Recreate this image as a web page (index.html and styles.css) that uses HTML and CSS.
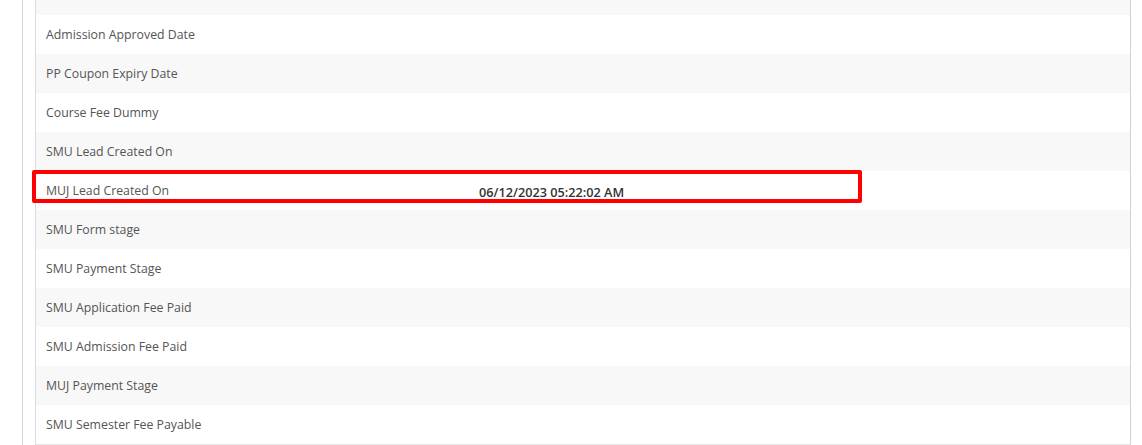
FILE: index.html
```html
<!DOCTYPE html>
<html lang="en">
<head>
    <meta charset="UTF-8">
    <title>Lead Details</title>
    <link rel="stylesheet" href="styles.css">
</head>
<body>
    <div class="painel">
        <div class="tabela">
            <div class="linha"><span class="rotulo"></span><span class="valor"></span></div>
            <div class="linha"><span class="rotulo">Admission Approved Date</span><span class="valor"></span></div>
            <div class="linha"><span class="rotulo">PP Coupon Expiry Date</span><span class="valor"></span></div>
            <div class="linha"><span class="rotulo">Course Fee Dummy</span><span class="valor"></span></div>
            <div class="linha"><span class="rotulo">SMU Lead Created On</span><span class="valor"></span></div>
            <div class="linha destaque"><span class="rotulo">MUJ Lead Created On</span><span class="valor">06/12/2023 05:22:02 AM</span></div>
            <div class="linha"><span class="rotulo">SMU Form stage</span><span class="valor"></span></div>
            <div class="linha"><span class="rotulo">SMU Payment Stage</span><span class="valor"></span></div>
            <div class="linha"><span class="rotulo">SMU Application Fee Paid</span><span class="valor"></span></div>
            <div class="linha"><span class="rotulo">SMU Admission Fee Paid</span><span class="valor"></span></div>
            <div class="linha"><span class="rotulo">MUJ Payment Stage</span><span class="valor"></span></div>
            <div class="linha"><span class="rotulo">SMU Semester Fee Payable</span><span class="valor"></span></div>
        </div>
    </div>
</body>
</html>
```

FILE: styles.css
```css
body {
    margin: 0;
    font-family: "Open Sans", "Noto Sans", Arial, sans-serif;
    background-color: white;
    overflow: hidden;
}
.painel {
    margin-left: 22px;
    padding-left: 12px;
    padding-right: 11px;
    border-left: 1px solid #d6d6d6;
}
.tabela {
    margin-top: -24px;
    border-left: 1px solid #dcdcdc;
    border-right: 1px solid #d0d0d0;
    border-bottom: 1px solid #e6e6e6;
}
.linha {
    display: grid;
    grid-template-columns: 433px 1fr;
    align-items: center;
    height: 39px;
    padding-left: 10px;
    font-size: 12.3px;
    color: #555;
    background-color: white;
}
.linha:nth-child(odd) {
    background-color: #f8f8f8;
}
.valor {
    color: #333;
    font-size: 12.7px;
    font-weight: 600;
    padding-top: 2px;
}
.destaque {
    position: relative;
}
.destaque::after {
    content: "";
    position: absolute;
    left: -4px;
    top: -1px;
    width: 822px;
    height: 25px;
    border: 4px solid #ff0000;
    border-radius: 2px;
}
```
